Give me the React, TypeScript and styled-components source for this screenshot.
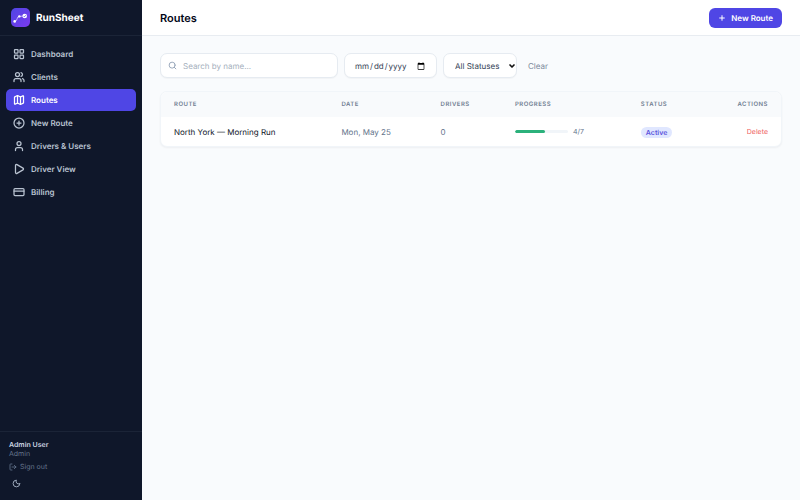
import React from "react";
import styled, { createGlobalStyle, css } from "styled-components";
import {
  LayoutGrid,
  Users,
  Map as MapIcon,
  CirclePlus,
  User,
  Play,
  CreditCard,
  LogOut,
  Moon,
  Search,
  Plus,
  ChevronDown,
  type LucideIcon,
} from "lucide-react";

const GlobalStyle = createGlobalStyle`
  *, *::before, *::after { box-sizing: border-box; }
  body {
    margin: 0;
    background: #f9fbfd;
    color: #0f172a;
    font-family: Inter, "Liberation Sans", sans-serif;
    font-size: 8px;
    line-height: 12px;
    text-rendering: geometricPrecision;
  }
  button, input, select { font: inherit; color: inherit; margin: 0; text-rendering: inherit; }
`;

const Shell = styled.div`
  display: flex;
  min-height: 100vh;
`;

const Sidebar = styled.aside`
  display: flex;
  flex-direction: column;
  flex: 0 0 142px;
  background: #0f172a;
  color: #cbd5e1;
`;

const Brand = styled.div`
  display: flex;
  align-items: center;
  gap: 6px;
  height: 36px;
  padding: 0 11px;
  border-bottom: 1px solid #1b2437;
  color: #fff;
  font-size: 10px;
  font-weight: 700;
`;

const Nav = styled.nav`
  display: flex;
  flex: 1;
  flex-direction: column;
  gap: 1px;
  padding: 7px 6px;
`;

const NavLink = styled.a<{ $active?: boolean }>`
  display: flex;
  align-items: center;
  gap: 6px;
  flex: none;
  height: 22px;
  padding: 0 7px;
  border-radius: 5px;
  color: #b9c3d1;
  font-weight: 600;
  text-decoration: none;
  ${(p) =>
    p.$active &&
    css`
      background: #4f46e5;
      color: #fff;
    `}
`;

const Account = styled.div`
  display: flex;
  flex-direction: column;
  align-items: flex-start;
  padding: 8px 9px 12px;
  border-top: 1px solid #1b2437;
  font-size: 7px;
  line-height: 9px;
  color: #64748b;
`;

const UserName = styled.strong`
  color: #cbd5e1;
  font-weight: 600;
`;

const SidebarButton = styled.button`
  display: flex;
  align-items: center;
  gap: 3px;
  margin-top: 4px;
  padding: 0;
  border: 0;
  background: none;
  color: #64748b;
`;

const ThemeButton = styled(SidebarButton)`
  margin-top: 8px;
  padding: 0 3px;
  color: #a3b0c2;
`;

const Content = styled.div`
  display: flex;
  flex: 1;
  flex-direction: column;
  min-width: 0;
`;

const TopBar = styled.header`
  display: flex;
  align-items: center;
  justify-content: space-between;
  height: 36px;
  padding: 0 18px;
  border-bottom: 1px solid #e8ecf1;
  background: #fff;
`;

const Title = styled.h1`
  margin: 0;
  font-size: 11px;
  font-weight: 600;
  color: #020617;
`;

const PrimaryButton = styled.button`
  display: flex;
  align-items: center;
  gap: 5px;
  height: 20px;
  padding: 0 9px;
  border: 0;
  border-radius: 6px;
  background: #4f46e5;
  color: #fff;
  font-weight: 600;
`;

const Main = styled.main`
  display: flex;
  flex-direction: column;
  gap: 13px;
  padding: 17px 18px;
`;

const Filters = styled.form`
  display: flex;
  align-items: center;
  gap: 6px;
`;

const field = css`
  height: 25px;
  border: 1px solid #e6ebf1;
  border-radius: 7px;
  background: #fff;
  box-shadow: 0 1px 1px rgba(15, 23, 42, 0.03);
  color: #334155;
`;

const SearchField = styled.label`
  ${field}
  display: flex;
  align-items: center;
  gap: 6px;
  width: 178px;
  padding: 0 7px;
  color: #94a3b8;
`;

const SearchInput = styled.input`
  flex: 1;
  min-width: 0;
  padding: 0;
  border: 0;
  outline: 0;
  background: none;
  color: #334155;
  &::placeholder { color: #a5afbd; }
`;

const DateInput = styled.input`
  ${field}
  width: 93px;
  padding: 0 9px;
`;

const SelectWrap = styled.div`
  display: grid;
  align-items: center;
  width: 74px;
  color: #111;

  > * { grid-area: 1 / 1; }
  > svg { justify-self: end; margin-right: 1px; pointer-events: none; }
`;

const StatusSelect = styled.select`
  ${field}
  appearance: none;
  width: 100%;
  padding: 0 11px;
`;

const ClearButton = styled.button`
  padding: 0 5px;
  border: 0;
  background: none;
  color: #7b899c;
`;

const Card = styled.section`
  overflow: hidden;
  border: 1px solid #f1f5f9;
  border-radius: 7px;
  background: #fff;
  box-shadow: 0 1px 2px rgba(15, 23, 42, 0.05);
`;

const Table = styled.table`
  width: 100%;
  border-collapse: collapse;
  table-layout: fixed;
`;

const HeadCell = styled.th<{ $width?: string; $end?: boolean }>`
  width: ${(p) => p.$width ?? "auto"};
  height: 25px;
  padding: 0 13px;
  background: #f8fafc;
  color: #717e92;
  font-size: 6px;
  font-weight: 600;
  letter-spacing: 0.08em;
  text-align: ${(p) => (p.$end ? "right" : "left")};
  text-transform: uppercase;
`;

const Cell = styled.td<{ $strong?: boolean; $end?: boolean }>`
  height: 29px;
  padding: 0 13px;
  color: ${(p) => (p.$strong ? "#0f172a" : "#64748b")};
  text-align: ${(p) => (p.$end ? "right" : "left")};
  white-space: nowrap;
`;

const Progress = styled.div`
  display: flex;
  align-items: center;
  gap: 5px;
  font-size: 7px;
`;

const Track = styled.div`
  width: 53px;
  height: 3px;
  overflow: hidden;
  border-radius: 2px;
  background: #f1f5f9;
`;

const Fill = styled.div`
  height: 100%;
  border-radius: 2px;
  background: #2bb17b;
`;

const Badge = styled.span`
  display: inline-block;
  padding: 0 5px;
  border-radius: 6px;
  background: #e0e7ff;
  color: #5b54dc;
  font-size: 7px;
  font-weight: 600;
  line-height: 11px;
  vertical-align: middle;
`;

const DeleteButton = styled.button`
  padding: 0;
  border: 0;
  background: none;
  color: #ef6464;
  font-size: 7px;
  vertical-align: middle;
`;

const Logo = () => (
  <svg width="19" height="19" viewBox="0 0 19 19" aria-hidden="true">
    <defs>
      <linearGradient id="logo-fill" x1="0" y1="0" x2="1" y2="1">
        <stop offset="0" stopColor="#4f46e5" />
        <stop offset="1" stopColor="#7c3aed" />
      </linearGradient>
    </defs>
    <rect width="19" height="19" rx="5" fill="url(#logo-fill)" />
    <path d="M3.7 13.4C7.2 13 5.2 8.4 8.3 8.4L13.5 8" fill="none" stroke="#fff" strokeOpacity="0.65" strokeWidth="0.9" />
    <circle cx="3.7" cy="13.4" r="1.3" fill="#fff" />
    <circle cx="8.3" cy="8.4" r="1.2" fill="#fff" />
    <circle cx="13.7" cy="8" r="2.3" fill="#fff" />
    <path d="m12.6 8 .8.8 1.5-1.6" fill="none" stroke="#5b43e8" strokeWidth="0.8" />
  </svg>
);

const navItems: { label: string; icon: LucideIcon; active?: boolean }[] = [
  { label: "Dashboard", icon: LayoutGrid },
  { label: "Clients", icon: Users },
  { label: "Routes", icon: MapIcon, active: true },
  { label: "New Route", icon: CirclePlus },
  { label: "Drivers & Users", icon: User },
  { label: "Driver View", icon: Play },
  { label: "Billing", icon: CreditCard },
];

const routes = [
  { name: "North York — Morning Run", date: "Mon, May 25", drivers: 0, done: 4, total: 7, status: "Active" },
];

export default function App() {
  return (
    <>
      <GlobalStyle />
      <Shell>
        <Sidebar>
          <Brand>
            <Logo />
            RunSheet
          </Brand>
          <Nav aria-label="Main">
            {navItems.map(({ label, icon: Icon, active }) => (
              <NavLink key={label} href="#" $active={active} aria-current={active ? "page" : undefined}>
                <Icon size={12} strokeWidth={2.5} />
                {label}
              </NavLink>
            ))}
          </Nav>
          <Account>
            <UserName>Admin User</UserName>
            <span>Admin</span>
            <SidebarButton type="button">
              <LogOut size={8} strokeWidth={2.5} />
              Sign out
            </SidebarButton>
            <ThemeButton type="button" aria-label="Toggle dark mode">
              <Moon size={9} strokeWidth={2.5} />
            </ThemeButton>
          </Account>
        </Sidebar>
        <Content>
          <TopBar>
            <Title>Routes</Title>
            <PrimaryButton type="button">
              <Plus size={8} strokeWidth={3} />
              New Route
            </PrimaryButton>
          </TopBar>
          <Main>
            <Filters>
              <SearchField>
                <Search size={9} strokeWidth={2.5} />
                <SearchInput type="text" placeholder="Search by name..." aria-label="Search by name" />
              </SearchField>
              <DateInput type="date" aria-label="Date" />
              <SelectWrap>
                <StatusSelect aria-label="Status" defaultValue="all">
                  <option value="all">All Statuses</option>
                  <option value="active">Active</option>
                </StatusSelect>
                <ChevronDown size={8} strokeWidth={5} />
              </SelectWrap>
              <ClearButton type="button">Clear</ClearButton>
            </Filters>
            <Card>
              <Table>
                <thead>
                  <tr>
                    <HeadCell $width="27%">Route</HeadCell>
                    <HeadCell $width="16%">Date</HeadCell>
                    <HeadCell $width="12%">Drivers</HeadCell>
                    <HeadCell $width="20.3%">Progress</HeadCell>
                    <HeadCell>Status</HeadCell>
                    <HeadCell $end>Actions</HeadCell>
                  </tr>
                </thead>
                <tbody>
                  {routes.map((r) => (
                    <tr key={r.name}>
                      <Cell $strong>{r.name}</Cell>
                      <Cell>{r.date}</Cell>
                      <Cell>{r.drivers}</Cell>
                      <Cell>
                        <Progress>
                          <Track>
                            <Fill style={{ width: `${(r.done / r.total) * 100}%` }} />
                          </Track>
                          {r.done}/{r.total}
                        </Progress>
                      </Cell>
                      <Cell>
                        <Badge>{r.status}</Badge>
                      </Cell>
                      <Cell $end>
                        <DeleteButton type="button">Delete</DeleteButton>
                      </Cell>
                    </tr>
                  ))}
                </tbody>
              </Table>
            </Card>
          </Main>
        </Content>
      </Shell>
    </>
  );
}
